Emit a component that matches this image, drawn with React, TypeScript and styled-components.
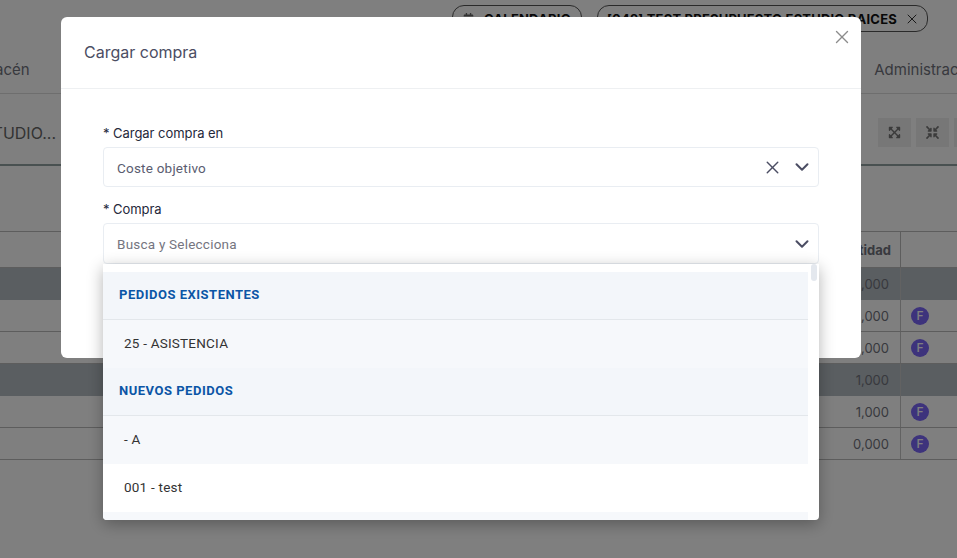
import React from 'react';
import styled, { createGlobalStyle } from 'styled-components';
import { X, ChevronDown } from 'lucide-react';
import { FaCalendarAlt, FaExpandArrowsAlt, FaCompressArrowsAlt } from 'react-icons/fa';

const Global = createGlobalStyle`
  html, body {
    margin: 0;
    padding: 0;
    width: 957px;
    height: 558px;
    overflow: hidden;
    background: #fff;
    font-family: Inter, "Liberation Sans", sans-serif;
  }
`;

const Page = styled.div`
  width: 957px;
  height: 558px;
  overflow: hidden;
  background: #fff;
`;

const TabBar = styled.div`
  height: 45px;
  box-sizing: border-box;
  padding: 5px 29px 0 0;
  display: flex;
  justify-content: flex-end;
  align-items: flex-start;
  gap: 15px;
`;

const Tab = styled.div<{ $closable?: boolean }>`
  height: 27px;
  box-sizing: border-box;
  border: 1px solid #555;
  border-radius: 12px;
  padding: ${({ $closable }) => ($closable ? '0 7px 0 9px' : '0 10px')};
  display: flex;
  align-items: center;
  gap: ${({ $closable }) => ($closable ? '7px' : '10px')};
  font-size: 13px;
  font-weight: 700;
  letter-spacing: 0.2px;
  color: #111;
  white-space: nowrap;
`;

const Nav = styled.div`
  height: 49px;
  box-sizing: border-box;
  border-bottom: 1px solid #ddd;
  margin-left: -32px;
  width: 1012px;
  display: flex;
  justify-content: space-between;
  align-items: center;
`;

const NavItem = styled.span`
  font-size: 15px;
  color: #70727c;
  white-space: nowrap;
`;

const Toolbar = styled.div`
  height: 72px;
  box-sizing: border-box;
  padding-top: 7px;
  border-bottom: 2px solid #93a3a3;
  display: flex;
  align-items: center;
`;

const TitleBox = styled.div`
  flex: none;
  width: 878px;
  box-sizing: border-box;
  padding-right: 822px;
  display: flex;
  justify-content: flex-end;
`;

const Title = styled.span`
  font-size: 16px;
  color: #666;
  white-space: nowrap;
`;

const Tools = styled.div`
  display: flex;
  flex: none;
  gap: 5px;
`;

const ToolButton = styled.div`
  width: 33px;
  height: 29px;
  background: #eee;
  color: #777;
  font-size: 13px;
  display: flex;
  align-items: center;
  justify-content: center;
`;

const Filters = styled.div`
  height: 66px;
  border-bottom: 1px solid #bbb;
  box-sizing: border-box;
`;

const TableRow = styled.div<{ $dark?: boolean; $head?: boolean }>`
  display: grid;
  grid-template-columns: 901px 56px;
  height: ${({ $head }) => ($head ? '36px' : '32px')};
  box-sizing: border-box;
  background: ${({ $dark }) => ($dark ? '#b4bcc2' : 'transparent')};
  border-bottom: ${({ $dark }) => ($dark ? 'none' : '1px solid #bbb')};
`;

const Cell = styled.div<{ $head?: boolean }>`
  display: flex;
  justify-content: flex-end;
  align-items: center;
  padding-right: ${({ $head }) => ($head ? '9px' : '11px')};
  border-right: 1px solid ${({ $head }) => ($head ? '#bbb' : '#c4c4c4')};
  font-size: 13px;
  font-weight: ${({ $head }) => ($head ? 700 : 400)};
  color: #70727c;
`;

const BadgeCell = styled.div`
  display: flex;
  align-items: center;
  padding-left: 10px;
`;

const Badge = styled.span`
  width: 18px;
  height: 18px;
  border-radius: 50%;
  background: #7a66f8;
  color: #fff;
  font-size: 12px;
  font-weight: 500;
  display: flex;
  align-items: center;
  justify-content: center;
`;

const Overlay = styled.div`
  position: fixed;
  inset: 0;
  background: rgba(0, 0, 0, 0.5);
  box-sizing: border-box;
  padding: 17px 96px 0 61px;
`;

const Modal = styled.div`
  position: relative;
  width: 800px;
  height: 341px;
  box-sizing: border-box;
  background: #fff;
  border-radius: 6px;
`;

const ModalHeader = styled.div`
  height: 72px;
  box-sizing: border-box;
  padding: 0 23px;
  border-bottom: 1px solid #eef0f2;
  display: flex;
  align-items: center;
`;

const ModalTitle = styled.h2`
  margin: 0 0 1px;
  font-size: 16px;
  font-weight: 400;
  color: #4b4d63;
`;

const CloseButton = styled.span`
  position: absolute;
  top: 9px;
  right: 8px;
  color: #8c8c8c;
  display: flex;
`;

const ModalBody = styled.div`
  padding: 36px 42px 0;
`;

const Field = styled.div`
  position: relative;
  margin-bottom: 14px;
`;

const Label = styled.div`
  font-size: 13px;
  line-height: 16px;
  letter-spacing: -0.05px;
  color: #25283b;
  margin-bottom: 6px;
`;

const Select = styled.div<{ $tall?: boolean }>`
  height: ${({ $tall }) => ($tall ? '41px' : '40px')};
  box-sizing: border-box;
  border: 1px solid #e9edf2;
  border-radius: 4px;
  padding: 0 5px 0 13px;
  display: flex;
  align-items: center;
  gap: 8px;
  color: #4b4d63;
`;

const Value = styled.span<{ $placeholder?: boolean }>`
  flex: 1;
  padding-top: ${({ $placeholder }) => ($placeholder ? '0' : '2px')};
  font-family: Roboto, sans-serif;
  font-size: 13.5px;
  letter-spacing: 0.22px;
  color: ${({ $placeholder }) => ($placeholder ? '#75757f' : '#5a5c70')};
`;

const Dropdown = styled.div`
  position: absolute;
  top: 100%;
  left: 0;
  right: 0;
  height: 256px;
  box-sizing: border-box;
  padding: 8px 11px 0 0;
  overflow: hidden;
  background: #fff;
  border-radius: 0 0 4px 4px;
  box-shadow: 0 4px 16px rgba(0, 0, 0, 0.3);
  font-family: Roboto, sans-serif;
`;

const ScrollThumb = styled.div`
  position: absolute;
  top: 0;
  right: 2px;
  width: 6px;
  height: 17px;
  border-radius: 3px;
  background: #e4e8ee;
`;

const GroupHead = styled.div`
  height: 48px;
  box-sizing: border-box;
  padding: 0 0 2px 16px;
  background: #f3f6fa;
  border-bottom: 1px solid #e3e7eb;
  display: flex;
  align-items: center;
  font-size: 13px;
  font-weight: 700;
  letter-spacing: 0.51px;
  color: #0b55a6;
`;

const Option = styled.div<{ $tinted?: boolean }>`
  height: 48px;
  box-sizing: border-box;
  padding: 0 0 2px 21px;
  background: ${({ $tinted }) => ($tinted ? '#f6f8fb' : '#fff')};
  display: flex;
  align-items: center;
  font-size: 13.5px;
  letter-spacing: 0.22px;
  color: #333;
`;

const quantities = [
  { value: '1,000', dark: true },
  { value: '1,000' },
  { value: '1,000' },
  { value: '1,000', dark: true },
  { value: '1,000' },
  { value: '0,000' },
];

export default function App() {
  return (
    <Page>
      <Global />
      <TabBar>
        <Tab>
          <FaCalendarAlt size={11} color="#666" />
          CALENDARIO
        </Tab>
        <Tab $closable>
          [042] TEST PRESUPUESTO ESTUDIO RAICES
          <X size={16} strokeWidth={1.5} color="#333" />
        </Tab>
      </TabBar>
      <Nav>
        <NavItem>Almacén</NavItem>
        <NavItem>Administración</NavItem>
      </Nav>
      <Toolbar>
        <TitleBox>
          <Title>[042] TEST PRESUPUESTO ESTUDIO...</Title>
        </TitleBox>
        <Tools>
          <ToolButton>
            <FaExpandArrowsAlt />
          </ToolButton>
          <ToolButton>
            <FaCompressArrowsAlt />
          </ToolButton>
          <ToolButton />
        </Tools>
      </Toolbar>
      <Filters />
      <TableRow $head>
        <Cell $head>Cantidad</Cell>
        <div />
      </TableRow>
      {quantities.map((row, index) => (
        <TableRow key={index} $dark={row.dark}>
          <Cell>{row.value}</Cell>
          <BadgeCell>{!row.dark && <Badge>F</Badge>}</BadgeCell>
        </TableRow>
      ))}
      <Overlay>
        <Modal>
          <ModalHeader>
            <ModalTitle>Cargar compra</ModalTitle>
          </ModalHeader>
          <CloseButton>
            <X size={22} strokeWidth={1.5} />
          </CloseButton>
          <ModalBody>
            <Field>
              <Label>* Cargar compra en</Label>
              <Select>
                <Value>Coste objetivo</Value>
                <X size={21} strokeWidth={1.6} />
                <ChevronDown size={22} strokeWidth={2.2} />
              </Select>
            </Field>
            <Field>
              <Label>* Compra</Label>
              <Select $tall>
                <Value $placeholder>Busca y Selecciona</Value>
                <ChevronDown size={22} strokeWidth={2.2} />
              </Select>
              <Dropdown>
                <ScrollThumb />
                <GroupHead>PEDIDOS EXISTENTES</GroupHead>
                <Option $tinted>25 - ASISTENCIA</Option>
                <GroupHead>NUEVOS PEDIDOS</GroupHead>
                <Option $tinted>- A</Option>
                <Option>001 - test</Option>
                <Option $tinted />
              </Dropdown>
            </Field>
          </ModalBody>
        </Modal>
      </Overlay>
    </Page>
  );
}
